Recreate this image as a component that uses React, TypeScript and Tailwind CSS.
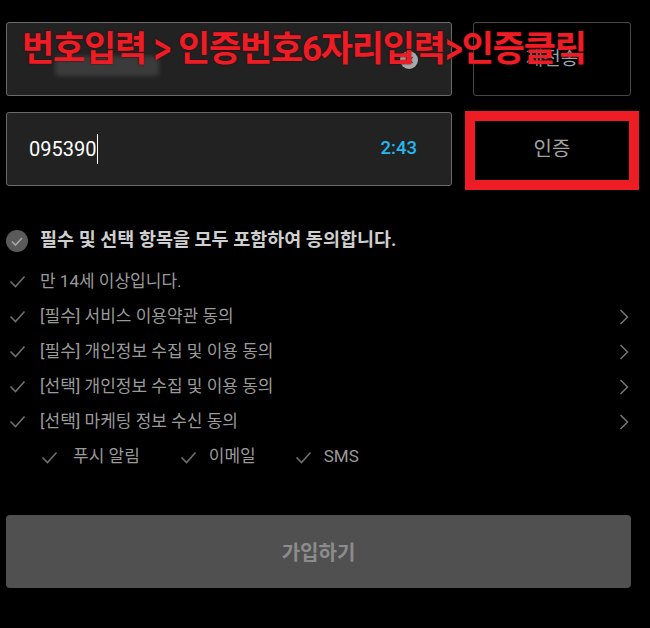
import React from "react";

const KR = "font-['Roboto','Noto_Sans_CJK_KR',sans-serif]";

function Tick({ className = "" }: { className?: string }) {
  return (
    <svg width="17" height="13" viewBox="0 0 17 13" className={className}>
      <polyline points="1.5,6.5 6.5,11.5 15.5,1.5" fill="none" stroke="#6f6f6f" strokeWidth="1.6" />
    </svg>
  );
}

function Chevron() {
  return (
    <svg width="10" height="16" viewBox="0 0 10 16">
      <polyline points="1.5,1 8.5,8 1.5,15" fill="none" stroke="#777" strokeWidth="1.5" />
    </svg>
  );
}

const terms = [
  { label: "만 14세 이상입니다.", more: false },
  { label: "[필수] 서비스 이용약관 동의", more: true },
  { label: "[필수] 개인정보 수집 및 이용 동의", more: true },
  { label: "[선택] 개인정보 수집 및 이용 동의", more: true },
  { label: "[선택] 마케팅 정보 수신 동의", more: true },
];

export default function App() {
  return (
    <div className={`relative min-h-[628px] w-[650px] bg-black ${KR}`}>
      <div className="ml-[6px] w-[625px] pt-[22px]">
        {/* phone number row */}
        <div className="flex h-[74px] gap-[21px]">
          <div className="relative flex flex-1 items-center rounded-[3px] border border-[#6a6a6a] bg-[#222222]">
            <div className="ml-[48px] mt-[14px] h-[20px] w-[104px] rounded-sm bg-[#3b3b3b] blur-[2px]" />
            <div className="absolute right-[33px] top-[28px] flex h-[18px] w-[18px] items-center justify-center rounded-full bg-[#a9a9a9] text-[11px] leading-none text-[#333]">
              ✕
            </div>
          </div>
          <button className="w-[158px] rounded-[3px] border border-[#474747] bg-black text-[19px] text-[#9aa4b0]">
            재전송
          </button>
        </div>

        {/* code row */}
        <div className="mt-4 flex h-[74px] gap-[21px]">
          <div className="flex flex-1 items-center rounded-[3px] border border-[#6a6a6a] bg-[#222222] pl-[22px] pr-[34px]">
            <span className="text-[20px] text-white">095390</span>
            <span className="ml-[1px] h-[30px] w-px bg-white" />
            <span className="ml-auto text-[18.5px] font-medium text-[#22b8f2]">2:43</span>
          </div>
          <div className="relative w-[158px]">
            <button className="h-full w-full rounded-[3px] border border-[#474747] bg-black text-[20px] text-[#a3a3a3]">
              인증
            </button>
            <div className="pointer-events-none absolute -left-[8px] -right-[8px] -top-[1px] -bottom-[4px] border-[10px] border-[#ee1c25]" />
          </div>
        </div>

        {/* agreements */}
        <div className="mt-[43px] flex h-[24px] items-center gap-[12px]">
          <span className="flex h-[22px] w-[22px] items-center justify-center rounded-full bg-[#5a5a5a]">
            <svg width="12" height="9" viewBox="0 0 12 9">
              <polyline points="1,4.5 4.5,8 11,1" fill="none" stroke="#a8a8a8" strokeWidth="1.6" />
            </svg>
          </span>
          <span className="text-[18.5px] font-bold text-[#cfcfcf]">필수 및 선택 항목을 모두 포함하여 동의합니다.</span>
        </div>

        <ul className="mt-[11px]">
          {terms.map((t) => (
            <li key={t.label} className="flex h-[35px] items-center">
              <Tick className="ml-[3px]" />
              <span className="ml-[14px] text-[17px] text-[#9a9a9a]">{t.label}</span>
              {t.more && (
                <span className="ml-auto mr-[2px]">
                  <Chevron />
                </span>
              )}
            </li>
          ))}
          <li className="flex h-[36px] items-center pl-[35px] text-[17px] text-[#9a9a9a]">
            <Tick />
            <span className="ml-[15px]">푸시 알림</span>
            <Tick className="ml-[40px]" />
            <span className="ml-[12px]">이메일</span>
            <Tick className="ml-[39px]" />
            <span className="ml-[12px]">SMS</span>
          </li>
        </ul>

        <button className="mt-[40px] h-[73px] w-full rounded-[4px] bg-[#505050] pt-[2px] text-[20px] font-bold text-[#8c8c8c]">
          가입하기
        </button>
      </div>

      {/* annotation overlay */}
      <div className="pointer-events-none absolute left-[22px] top-[32px] whitespace-nowrap text-[35px] font-bold leading-none tracking-[-1.2px] text-[#ee1c25] [text-shadow:0_0_2px_#3a0000]">
        번호입력 <span className="inline-block scale-y-[1.3] font-medium">&gt;</span> 인증번호6자리입력
        <span className="inline-block scale-y-[1.3] font-medium">&gt;</span>인증클릭
      </div>
    </div>
  );
}
